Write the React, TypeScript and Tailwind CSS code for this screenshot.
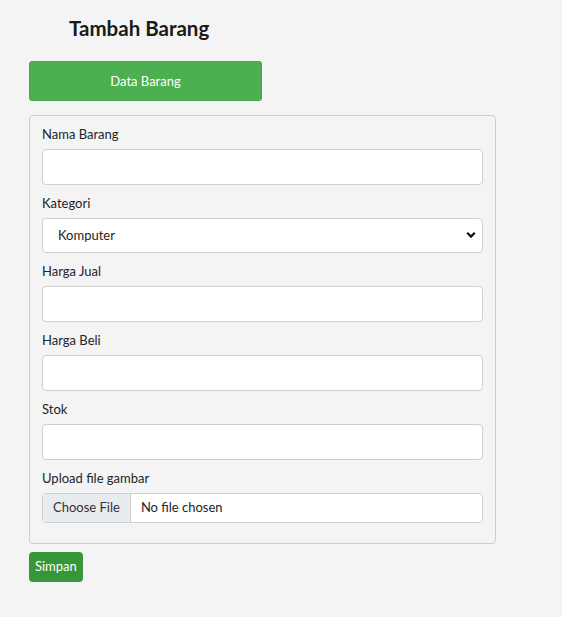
import { useState } from "react";

const labelCls = "block mt-[8px] mb-[4px] text-[13px] leading-[21px] text-[#212529]";
const inputCls =
  "block w-full h-[36px] rounded-[4px] border border-[#cfcfcf] bg-white px-3 text-[13px] outline-none";

export default function App() {
  const [kategori, setKategori] = useState("Komputer");

  return (
    <div className="min-h-[617px] w-full bg-[#f4f4f4] font-['Lato',sans-serif] text-[#212529]">
      <div className="px-[29px] pt-[14px]">
        <h3 className="pl-[40px] text-[20.5px] font-bold leading-[28px] text-[#1a1a1a]">
          Tambah Barang
        </h3>

        <button className="mt-[19px] h-[40px] w-[233px] rounded-[3px] border border-[#45a349] bg-[#4caf50] pt-[2px] text-[13px] text-white">
          Data Barang
        </button>

        <form className="mt-[14px] w-[467px] rounded-[4px] border border-[#cccccc] px-[12px] pb-[20px]">
          <label className={labelCls}>Nama Barang</label>
          <input type="text" className={inputCls} />

          <label className={labelCls}>Kategori</label>
          <div className="relative">
            <select
              value={kategori}
              onChange={(e) => setKategori(e.target.value)}
              className="block h-[35px] w-full appearance-none rounded-[4px] border border-[#cfcfcf] bg-white pl-[15px] text-[13px] outline-none"
            >
              <option>Komputer</option>
              <option>Laptop</option>
              <option>Aksesoris</option>
            </select>
            <svg
              className="pointer-events-none absolute right-[7px] top-[13px]"
              width="10"
              height="8"
              viewBox="0 0 10 8"
            >
              <path d="M1.2 1.8 L5 5.6 L8.8 1.8" fill="none" stroke="#111" strokeWidth="2.2" />
            </svg>
          </div>

          <label className={labelCls}>Harga Jual</label>
          <input type="text" className={inputCls} />

          <label className={labelCls}>Harga Beli</label>
          <input type="text" className={inputCls} />

          <label className={labelCls}>Stok</label>
          <input type="text" className={inputCls} />

          <label className={labelCls}>Upload file gambar</label>
          <div className="flex h-[30px] w-full overflow-hidden rounded-[4px] border border-[#cfcfcf] bg-white text-[13px]">
            <span className="flex items-center border-r border-[#cfcfcf] bg-[#e9ecef] px-[10px] text-[#333]">
              Choose File
            </span>
            <span className="flex items-center pl-[10px] text-[#212529]">No file chosen</span>
          </div>
        </form>

        <button className="mt-[8px] h-[30px] rounded-[4px] bg-[#379638] px-[6px] text-[13px] text-white">
          Simpan
        </button>
      </div>
    </div>
  );
}
